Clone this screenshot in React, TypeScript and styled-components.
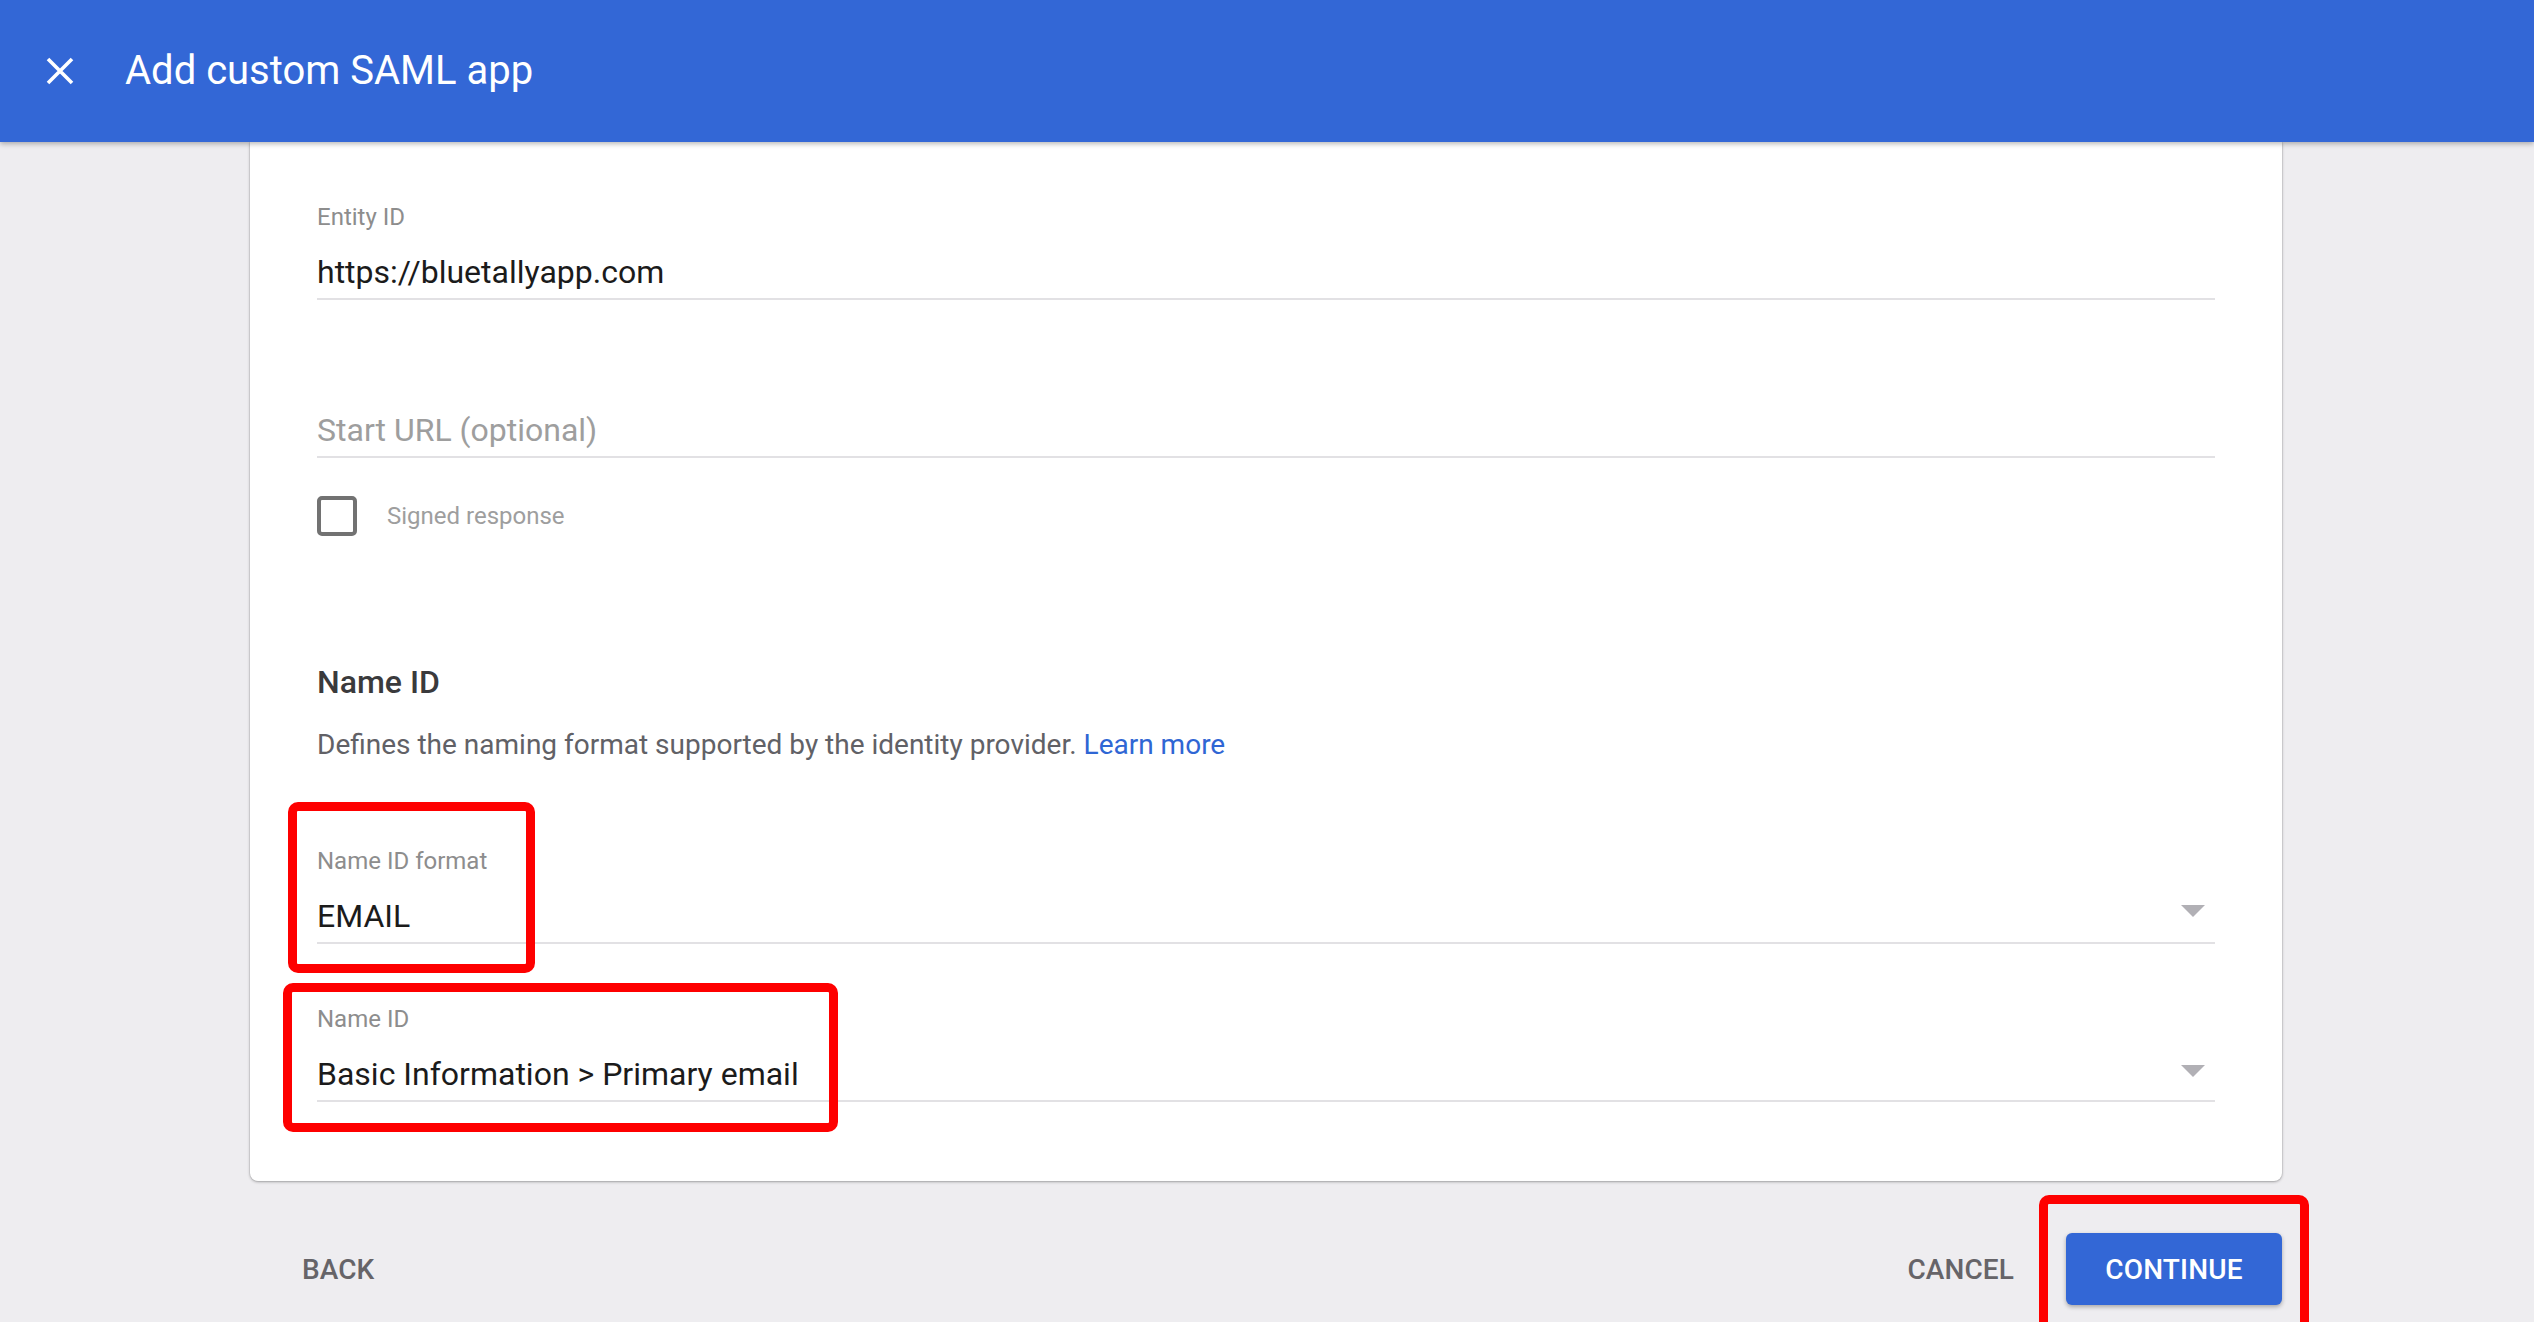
import React from "react";
import styled, { createGlobalStyle } from "styled-components";

const GlobalStyle = createGlobalStyle`
  html, body {
    margin: 0;
    padding: 0;
    height: 100%;
    overflow: hidden;
    background: #eeedf0;
    font-family: Roboto, "Noto Sans", "Liberation Sans", sans-serif;
  }
  * { box-sizing: border-box; }
`;

const Page = styled.div`
  min-height: 100vh;
  display: flex;
  flex-direction: column;
`;

const Header = styled.header`
  position: relative;
  z-index: 2;
  height: 142px;
  background: #3367d6;
  display: flex;
  align-items: center;
  padding-left: 46px;
  gap: 51px;
  box-shadow: 0 2px 5px rgba(0, 0, 0, 0.28);
`;

const CloseButton = styled.button`
  width: 28px;
  height: 28px;
  padding: 0;
  border: none;
  background: transparent;
  display: flex;
  align-items: center;
  justify-content: center;
  cursor: pointer;
`;

const Title = styled.h1`
  margin: 0;
  font-size: 40px;
  font-weight: 400;
  color: #ffffff;
  line-height: 48px;
`;

const Main = styled.main`
  width: 2032px;
  margin-left: calc(50% - 1017px);
`;

const Card = styled.section`
  position: relative;
  background: #ffffff;
  border-radius: 0 0 8px 8px;
  box-shadow: 0 1px 3px rgba(0, 0, 0, 0.3), 0 0 0 1px rgba(0, 0, 0, 0.05);
  padding: 61px 67px 79px 67px;
  display: flex;
  flex-direction: column;
`;

const Field = styled.div<{ $mt?: number }>`
  margin-top: ${(p) => p.$mt ?? 0}px;
  display: flex;
  flex-direction: column;
`;

const Label = styled.div`
  height: 28px;
  font-size: 24px;
  line-height: 28px;
  color: #8d8d8d;
`;

const InputRow = styled.div`
  margin-top: 21px;
  display: flex;
  align-items: center;
  padding-bottom: 6px;
  border-bottom: 2px solid #e2e1e4;
`;

const Value = styled.div<{ $placeholder?: boolean }>`
  flex: 1;
  height: 40px;
  font-size: 32px;
  line-height: 40px;
  color: ${(p) => (p.$placeholder ? "#9e9e9e" : "#1b1b1b")};
`;

const Arrow = styled.span<{ $lift: number }>`
  width: 0;
  height: 0;
  border-left: 12px solid transparent;
  border-right: 12px solid transparent;
  border-top: 12px solid #b1b0b5;
  margin-right: 10px;
  margin-bottom: ${(p) => p.$lift}px;
`;

const CheckRow = styled.label`
  margin-top: 38px;
  display: flex;
  align-items: center;
  gap: 30px;
`;

const Checkbox = styled.span`
  width: 40px;
  height: 40px;
  border: 4px solid #727272;
  border-radius: 5px;
  background: #fff;
`;

const CheckLabel = styled.span`
  font-size: 24px;
  line-height: 28px;
  color: #9e9e9e;
`;

const SectionTitle = styled.h2`
  margin: 126px 0 0 0;
  font-size: 32px;
  line-height: 40px;
  font-weight: 500;
  color: #3a3a3c;
`;

const Description = styled.p`
  margin: 26px 0 0 0;
  font-size: 28px;
  line-height: 34px;
  color: #616166;
`;

const LearnMore = styled.a`
  color: #2f66d4;
  text-decoration: none;
`;

const Annotation = styled.div<{ $l: number; $t: number; $w: number; $h: number }>`
  position: absolute;
  left: ${(p) => p.$l}px;
  top: ${(p) => p.$t}px;
  width: ${(p) => p.$w}px;
  height: ${(p) => p.$h}px;
  border: 9px solid #fe0000;
  border-radius: 10px;
  pointer-events: none;
`;

const Footer = styled.footer`
  display: flex;
  align-items: center;
  padding-top: 52px;
`;

const TextButton = styled.button<{ $ml?: number }>`
  margin-left: ${(p) => p.$ml ?? 0}px;
  height: 72px;
  padding: 0 20px;
  border: none;
  background: transparent;
  font-family: Roboto, "Liberation Sans", sans-serif;
  font-size: 28px;
  font-weight: 500;
  letter-spacing: 0.1px;
  color: #666468;
  cursor: pointer;
`;

const Spacer = styled.div`
  flex: 1;
`;

const PrimaryWrap = styled.div`
  position: relative;
  margin-left: 32px;
`;

const PrimaryButton = styled.button`
  height: 72px;
  width: 216px;
  border: none;
  border-radius: 6px;
  background: #3367d6;
  color: #ffffff;
  font-family: Roboto, "Liberation Sans", sans-serif;
  font-size: 28px;
  font-weight: 500;
  letter-spacing: 0.2px;
  box-shadow: 0 2px 4px rgba(0, 0, 0, 0.3);
  cursor: pointer;
`;

const CloseIcon = () => (
  <svg width="28" height="28" viewBox="0 0 28 28">
    <path d="M2 2 L26 26 M26 2 L2 26" stroke="#ffffff" strokeWidth="3.6" fill="none" />
  </svg>
);

export default function App() {
  return (
    <>
      <GlobalStyle />
      <Page>
        <Header>
          <CloseButton aria-label="Close">
            <CloseIcon />
          </CloseButton>
          <Title>Add custom SAML app</Title>
        </Header>
        <Main>
          <Card>
            <Field>
              <Label>Entity ID</Label>
              <InputRow>
                <Value>https://bluetallyapp.com</Value>
              </InputRow>
            </Field>
            <Field $mt={61}>
              <Label />
              <InputRow>
                <Value $placeholder>Start URL (optional)</Value>
              </InputRow>
            </Field>
            <CheckRow>
              <Checkbox />
              <CheckLabel>Signed response</CheckLabel>
            </CheckRow>
            <SectionTitle>Name ID</SectionTitle>
            <Description>
              Defines the naming format supported by the identity provider.{" "}
              <LearnMore href="#">Learn more</LearnMore>
            </Description>
            <Field $mt={85}>
              <Label>Name ID format</Label>
              <InputRow>
                <Value>EMAIL</Value>
                <Arrow $lift={10} />
              </InputRow>
            </Field>
            <Field $mt={61}>
              <Label>Name ID</Label>
              <InputRow>
                <Value>Basic Information &gt; Primary email</Value>
                <Arrow $lift={6} />
              </InputRow>
            </Field>
            <Annotation $l={38} $t={660} $w={247} $h={171} />
            <Annotation $l={33} $t={841} $w={555} $h={149} />
          </Card>
          <Footer>
            <TextButton $ml={32}>BACK</TextButton>
            <Spacer />
            <TextButton>CANCEL</TextButton>
            <PrimaryWrap>
              <PrimaryButton>CONTINUE</PrimaryButton>
              <Annotation $l={-27} $t={-38} $w={270} $h={180} />
            </PrimaryWrap>
          </Footer>
        </Main>
      </Page>
    </>
  );
}
